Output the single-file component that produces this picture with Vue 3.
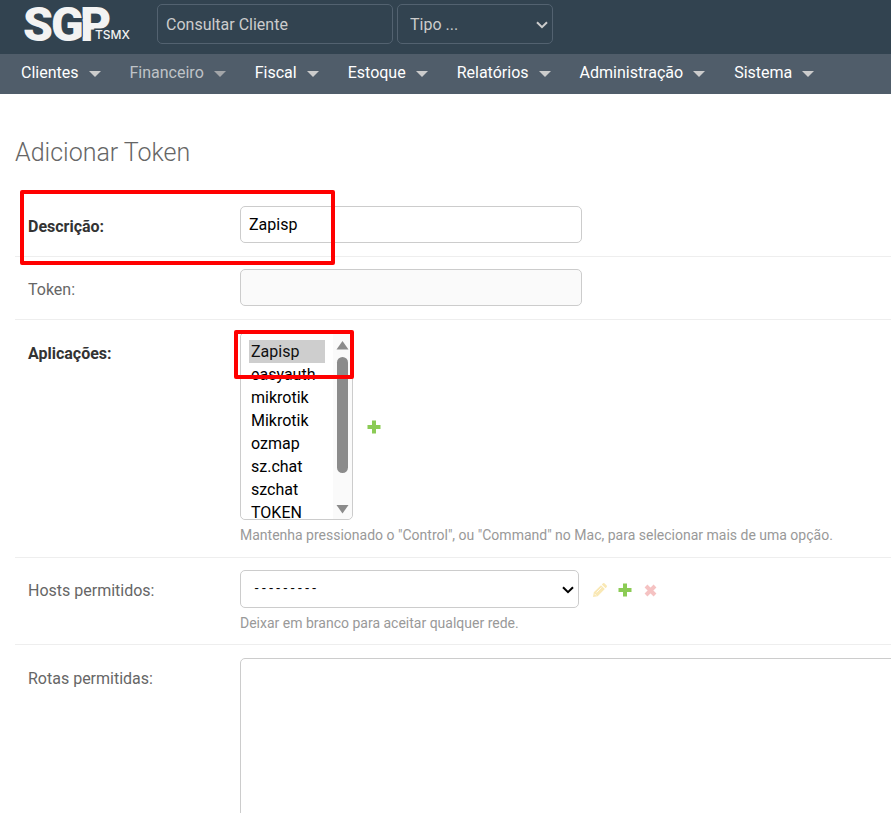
<script setup>
import { ref } from 'vue'

const menus = [
  { name: 'Clientes' },
  { name: 'Financeiro', muted: true },
  { name: 'Fiscal' },
  { name: 'Estoque' },
  { name: 'Relatórios' },
  { name: 'Administração' },
  { name: 'Sistema' },
]
const apps = ['Zapisp', 'easyauth', 'mikrotik', 'Mikrotik', 'ozmap', 'sz.chat', 'szchat', 'TOKEN']
const selectedApps = ref(['Zapisp'])
const description = ref('Zapisp')
const token = ref('')
const client = ref('')
const routes = ref('')
</script>

<template>
  <div class="page">
    <header class="topbar">
      <a class="brand" href="#" aria-label="SGP TSMX">
        <svg width="110" height="54" viewBox="0 0 110 54" aria-hidden="true">
          <g class="brand-main">
            <text x="0" y="41">S</text>
            <text x="57" y="41">P</text>
            <text x="28" y="41">G</text>
          </g>
          <text class="brand-sub" x="72" y="39">TSMX</text>
        </svg>
      </a>
      <input v-model="client" class="search" type="text" placeholder="Consultar Cliente" aria-label="Consultar Cliente" />
      <div class="select-wrap kind">
        <select aria-label="Tipo"><option>Tipo ...</option></select>
        <svg class="chevron" width="12" height="8" viewBox="0 0 12 8" aria-hidden="true"><path d="M1 1.2 6 6.2 11 1.2" /></svg>
      </div>
    </header>

    <nav class="menu">
      <a v-for="m in menus" :key="m.name" href="#" :class="{ muted: m.muted }">
        {{ m.name }}
        <svg width="12" height="6" viewBox="0 0 12 6" aria-hidden="true"><path d="M0 0H12L6 6Z" /></svg>
      </a>
    </nav>

    <main>
      <h1>Adicionar Token</h1>
      <form @submit.prevent>
        <div class="row">
          <label class="required" for="description">Descrição:</label>
          <div class="field"><input id="description" v-model="description" type="text" class="text" /></div>
          <span class="mark mark-description"></span>
        </div>

        <div class="row">
          <label for="token">Token:</label>
          <div class="field"><input id="token" v-model="token" type="text" class="text" readonly /></div>
        </div>

        <div class="row tall">
          <label class="required" for="apps">Aplicações:</label>
          <div class="field">
            <div class="line">
              <div class="listbox">
                <select id="apps" v-model="selectedApps" multiple size="8">
                  <option v-for="a in apps" :key="a" :value="a">{{ a }}</option>
                </select>
                <svg class="scroll" width="19" height="186" viewBox="0 0 19 186" aria-hidden="true">
                  <path d="M9.500 8 15.500 16.500H3.500Z" />
                  <rect x="4" y="24" width="11" height="116" rx="5.500" />
                  <path d="M9.500 180.500 15.500 172H3.500Z" />
                </svg>
                <span class="mark mark-app"></span>
              </div>
              <div class="actions">
                <button type="button" class="icon" aria-label="Adicionar aplicação">
                  <svg width="14" height="14" viewBox="0 0 14 14"><path class="add" d="M5 .5h4V5h4.500v4H9v4.500H5V9H.5V5H5Z" /></svg>
                </button>
              </div>
            </div>
            <p class="help">Mantenha pressionado o "Control", ou "Command" no Mac, para selecionar mais de uma opção.</p>
          </div>
        </div>

        <div class="row">
          <label for="hosts">Hosts permitidos:</label>
          <div class="field">
            <div class="line">
              <div class="select-wrap hosts">
                <select id="hosts"><option>---------</option></select>
                <svg class="chevron" width="12" height="8" viewBox="0 0 12 8" aria-hidden="true"><path d="M1 1.200 6 6.200 11 1.200" /></svg>
              </div>
              <div class="actions">
                <button type="button" class="icon" aria-label="Editar">
                  <svg width="14" height="14" viewBox="0 0 14 14">
                    <path class="edit" d="M0 14 .8 9.300 8 2.200 11.800 6 4.700 13.200ZM8.800 1.400 10 .3Q10.700-.3 11.400.3L13.700 2.600Q14.300 3.300 13.700 4L12.600 5.200Z" />
                    <path class="edit-line" d="M3.500 9.500 8.500 4.500M1.500 10.800 3.200 12.500" />
                  </svg>
                </button>
                <button type="button" class="icon" aria-label="Adicionar host">
                  <svg width="14" height="14" viewBox="0 0 14 14"><path class="add" d="M5 .5h4V5h4.500v4H9v4.500H5V9H.5V5H5Z" /></svg>
                </button>
                <button type="button" class="icon" aria-label="Remover">
                  <svg width="14" height="14" viewBox="0 0 14 14"><path class="remove" d="M3 3 12 12M12 3 3 12" /></svg>
                </button>
              </div>
            </div>
            <p class="help">Deixar em branco para aceitar qualquer rede.</p>
          </div>
        </div>

        <div class="row tall">
          <label for="routes">Rotas permitidas:</label>
          <div class="field wide"><textarea id="routes" v-model="routes"></textarea></div>
        </div>
      </form>
    </main>
  </div>
</template>

<style>
body {
  margin: 0;
  background: #fff;
}
</style>

<style scoped>
* {
  box-sizing: border-box;
}
.page {
  height: 100vh;
  overflow: hidden;
  font: 16px/20px Roboto, "Liberation Sans", sans-serif;
  color: #666;
}
input, select, textarea {
  font: inherit;
  margin: 0;
}
.topbar {
  display: flex;
  align-items: flex-start;
  height: 54px;
  padding: 0 24px 0 23px;
  background: #324350;
}
.brand {
  display: flex;
  width: 134px;
}
.brand svg {
  overflow: visible;
}
.brand-main {
  font: 900 48px Roboto, sans-serif;
  fill: #f3f3f3;
  stroke: #324350;
  stroke-width: 2px;
  paint-order: stroke;
}
.brand-sub {
  font: 500 12px Inter, sans-serif;
  fill: #f3f3f3;
  stroke: #324350;
  stroke-width: 3px;
  paint-order: stroke;
}
.search,
.kind select {
  height: 40px;
  border: 1px solid #536270;
  border-radius: 5px;
  background: transparent;
  color: #ccc;
}
.search {
  width: 236px;
  padding: 0 8px;
  margin: 4px 4px 0 0;
}
.search::placeholder {
  color: #ccc;
  opacity: 1;
}
.select-wrap {
  position: relative;
}
.select-wrap select {
  appearance: none;
  width: 100%;
  padding: 0 12px;
  display: block;
}
.kind {
  width: 156px;
  margin-top: 4px;
}
.kind select {
  padding-top: 1px;
}
.chevron {
  position: absolute;
  top: 50%;
  right: 5px;
  margin-top: -3px;
  fill: none;
  stroke: #000;
  stroke-width: 2;
  pointer-events: none;
}
.kind .chevron {
  stroke: #ccc;
}
.menu {
  display: flex;
  gap: 29px;
  height: 40px;
  padding: 0 21px 2px;
  background: #505d6a;
}
.menu a {
  display: flex;
  align-items: center;
  gap: 10px;
  color: #fff;
  text-decoration: none;
  white-space: nowrap;
}
.menu a.muted {
  color: #bfc3c7;
}
.menu svg {
  margin-top: 2px;
  fill: #ccc;
}
.menu .muted svg {
  fill: #a3a6a9;
}
main {
  padding: 43px 0 0 15px;
}
h1 {
  margin: 0 0 25px;
  font-size: 25px;
  line-height: 32px;
  font-weight: 300;
  color: #666;
}
.row {
  position: relative;
  display: flex;
  padding: 12px 0 13px 13px;
  border-bottom: 1px solid #eee;
}
.row > label {
  flex: 0 0 212px;
  padding-top: 11px;
}
.row.tall {
  padding-bottom: 14px;
}
.row.tall > label {
  padding-top: 12px;
}
.row > label.required {
  font-weight: 700;
  color: #333;
}
.field {
  flex: 1;
  min-width: 0;
}
.field.wide {
  margin-right: -12px;
}
.line {
  display: flex;
  align-items: center;
  gap: 14px;
}
.text,
.hosts select,
textarea,
.listbox {
  border: 1px solid #ccc;
  border-radius: 5px;
  background: #fff;
  color: #000;
}
.text {
  display: block;
  width: 342px;
  height: 37px;
  padding: 0 8px;
}
.text[readonly] {
  background: #fafafa;
}
.listbox {
  position: relative;
  display: flex;
  width: 113px;
  height: 188px;
}
.listbox select {
  flex: 1;
  min-width: 0;
  height: 100%;
  padding: 7px 8px 0;
  border: 0;
  outline: 0;
  border-radius: 5px;
  background: #fff;
  color: #000;
  overflow: hidden;
  scrollbar-width: none;
}
.listbox option {
  height: 23px;
  padding: 2px;
  line-height: 19px;
}
.scroll {
  flex: none;
  background: #fafafa;
  border-radius: 0 5px 5px 0;
  fill: #8b8b8b;
}
.help {
  margin: 0;
  padding-top: 7px;
  font-size: 14px;
  line-height: 16px;
  color: #999;
}
.hosts {
  width: 339px;
}
.hosts select {
  height: 38px;
  font: 12px "Liberation Mono", monospace;
}
.actions {
  display: flex;
  gap: 11px;
  padding-top: 2px;
}
.icon {
  display: flex;
  padding: 0;
  border: 0;
  background: none;
}
.icon svg {
  overflow: visible;
}
.add {
  fill: #8bcb55;
}
.edit {
  fill: #f9e8b5;
}
.edit-line {
  fill: none;
  stroke: #fffaf0;
  stroke-width: 1;
}
.remove {
  fill: none;
  stroke: #f5c2c2;
  stroke-width: 4;
}
textarea {
  display: block;
  width: 100%;
  height: 240px;
  padding: 8px;
  margin-top: 1px;
  resize: none;
}
.mark {
  position: absolute;
  border: 4px solid #f00;
  border-radius: 2px;
  pointer-events: none;
}
.mark-description {
  top: -4px;
  left: 5px;
  width: 315px;
  height: 75px;
}
.mark-app {
  top: -3px;
  left: -7px;
  width: 120px;
  height: 49px;
}
</style>
